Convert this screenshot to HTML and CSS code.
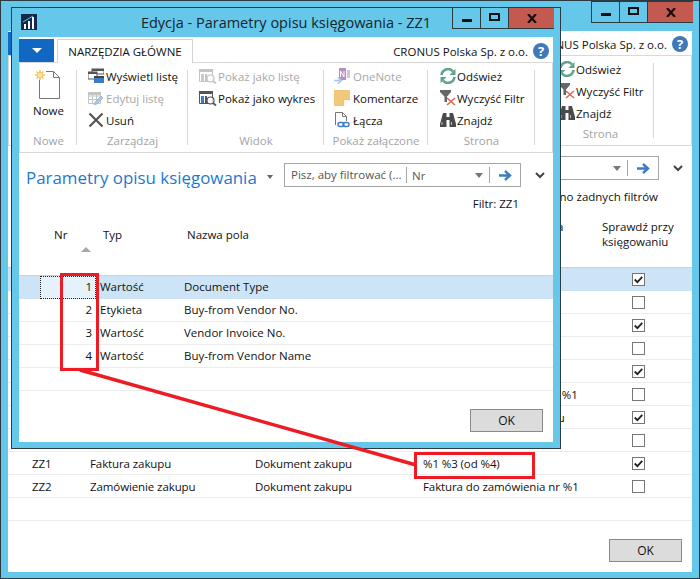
FILE: index.html
```html
<!DOCTYPE html>
<html lang="pl">
<head>
  <meta charset="UTF-8">
  <meta name="viewport" content="width=device-width, initial-scale=1.0">
  <title>Parametry opisu księgowania</title>
  <link rel="stylesheet" href="styles.css">
</head>
<body>
  <!-- shared ribbon icons -->
  <svg class="icon-defs" width="0" height="0">
    <symbol id="i-new" viewBox="0 0 26 29">
      <path d="M5.5 10V28.500H25.500V7.500L19.500 1.500H12" fill="#fff" stroke="#777"/>
      <path d="M19.500 1.500V7.500H25.500" fill="none" stroke="#777"/>
      <path d="M6 0V10M1 5H11M2.500 1.500L9.500 8.500M9.500 1.500L2.500 8.500" stroke="#f2c45f" stroke-width="1.600"/>
      <circle cx="6" cy="5" r="2.500" fill="#fbe7b0" stroke="#f2c45f"/>
    </symbol>
    <symbol id="i-show" viewBox="0 0 16 16">
      <rect x="4" y="1" width="12" height="5" fill="#fff" stroke="#555"/>
      <rect x="4" y="1" width="12" height="2" fill="#555"/>
      <rect x="0" y="4" width="9" height="7" fill="#fff" stroke="#555"/>
      <rect x="0" y="4" width="9" height="2" fill="#555"/>
      <rect x="6" y="8" width="10" height="7" fill="#3d7cc4"/>
      <rect x="6" y="8" width="10" height="2" fill="#444"/>
    </symbol>
    <symbol id="i-edit" viewBox="0 0 16 16">
      <path d="M.5 2.500H12.500V13.500H.5ZM.5 6H12.500M.5 9.500H12.500M4.500 2.500V13.500M8.500 2.500V13.500" fill="#fff" stroke="#c4c4c4"/>
      <rect x="0" y="2" width="13" height="3" fill="#c4c4c4"/>
      <path d="M6 15L7 12L13 6L15 8L9 14Z" fill="#a9c6e4" stroke="#8fb0d2" stroke-width=".6"/>
    </symbol>
    <symbol id="i-delete" viewBox="0 0 16 16">
      <path d="M1.500 1.500L14.500 14.500M14.500 1.500L1.500 14.500" stroke="#555" stroke-width="2.200"/>
    </symbol>
    <symbol id="i-view" viewBox="0 0 18 16">
      <path d="M.5 2.500H13.500V13.500H.5Z" fill="#fff" stroke="currentColor"/>
      <rect x="0" y="1" width="14" height="3" fill="currentColor"/>
      <rect x="2" y="6" width="3" height="7" fill="var(--bar, #c9c9c9)"/>
      <rect x="6" y="6" width="2" height="7" fill="currentColor"/>
      <circle cx="11.500" cy="10.500" r="3.500" fill="#fff" fill-opacity=".8" stroke="currentColor" stroke-width="1.200"/>
      <path d="M14 13L17 15.500" stroke="currentColor" stroke-width="1.800"/>
    </symbol>
    <symbol id="i-onenote" viewBox="0 0 16 16">
      <rect x="5" y="0" width="7" height="12" fill="#b68fc4"/>
      <path d="M6.500 9V3L10 9V3" fill="none" stroke="#fff"/>
      <rect x="13" y="2" width="3" height="8" fill="#d6c3dd"/>
      <path d="M0 12.500H6M4 9.500L7.500 12.500L4 15.500" fill="none" stroke="#a9c6e4" stroke-width="1.600"/>
    </symbol>
    <symbol id="i-note" viewBox="0 0 15 15">
      <path d="M0 0H15V9L9 15H0Z" fill="#f1c878"/>
      <path d="M9 15V9H15Z" fill="#fff"/>
      <path d="M9 15V9H15" fill="none" stroke="#e0ad58" stroke-width=".6"/>
    </symbol>
    <symbol id="i-link" viewBox="0 0 16 16">
      <path d="M1.500 13V.5H8.500L12.500 4.500V9" fill="#fff" stroke="#777"/>
      <path d="M8.500 .5V4.500H12.500" fill="none" stroke="#777"/>
      <rect x="4" y="10.500" width="6" height="4" rx="2" fill="none" stroke="#3d7cc4" stroke-width="1.400"/>
      <rect x="9" y="10.500" width="6" height="4" rx="2" fill="none" stroke="#3d7cc4" stroke-width="1.400"/>
    </symbol>
    <symbol id="i-refresh" viewBox="0 0 16 16">
      <path d="M1.500 7A6.500 6.500 0 0 1 13 3.500" fill="none" stroke="#5fa58c" stroke-width="2.600"/>
      <path d="M15.500 1V7H9.500Z" fill="#5fa58c"/>
      <path d="M14.500 9A6.500 6.500 0 0 1 3 12.500" fill="none" stroke="#5fa58c" stroke-width="2.600"/>
      <path d="M.5 15V9H6.500Z" fill="#5fa58c"/>
    </symbol>
    <symbol id="i-clear" viewBox="0 0 16 16">
      <path d="M0 0H11V2L7 6.500V12H4.500V6.500L0 2Z" fill="#666"/>
      <path d="M7 8L15 15M15 8L7 15" stroke="#e0604c" stroke-width="1.500"/>
    </symbol>
    <symbol id="i-find" viewBox="0 0 16 16">
      <path d="M3 1H6.500V5H9.500V1H13L16 12V15H9.500V8H6.500V15H0V12Z" fill="#4a4a4a"/>
      <path d="M2 10V13M11.500 10V13" stroke="#bbb"/>
    </symbol>
    <symbol id="i-check" viewBox="0 0 12 10">
      <path d="M1 5L4.500 8.500L11 1.500" fill="none" stroke="#222" stroke-width="2.400"/>
    </symbol>
  </svg>

  <!-- window behind -->
  <section class="window window-back">
    <header class="titlebar">
      <div class="caption">
        <span class="cap-btn"><i class="cap-min"></i></span>
        <span class="cap-btn"><i class="cap-max"></i></span>
        <span class="cap-btn cap-close"><svg width="10" height="9"><path d="M1 0L9 9M9 0L1 9" stroke="#111" stroke-width="2.200"/></svg></span>
      </div>
    </header>
    <div class="client">
      <div class="tabstrip tabstrip-back">
        <span class="app-btn"></span>
        <span class="company">CRONUS Polska Sp. z o.o.</span>
        <span class="help">?</span>
      </div>
      <div class="ribbon ribbon-back">
        <div class="group group-strona">
          <div class="group-items">
            <div class="rb-item"><svg class="ico"><use href="#i-refresh"/></svg>Odśwież</div>
            <div class="rb-item"><svg class="ico"><use href="#i-clear"/></svg>Wyczyść Filtr</div>
            <div class="rb-item"><svg class="ico"><use href="#i-find"/></svg>Znajdź</div>
          </div>
          <div class="group-label">Strona</div>
        </div>
      </div>
      <div class="page-head page-head-back">
        <div class="search">
          <span class="search-text"></span>
          <span class="search-field"></span>
          <span class="search-caret"></span>
          <span class="search-go"><svg width="13" height="11"><path d="M0 5.500H10M6 1L11 5.500L6 10" fill="none" stroke="#3d7cc4" stroke-width="2.400"/></svg></span>
        </div>
        <svg class="chevron" width="10" height="7"><path d="M1 1L5 5L9 1" fill="none" stroke="#444" stroke-width="2"/></svg>
      </div>
      <div class="filter-line filter-line-back">Nie zastosowano żadnych filtrów</div>
      <div class="back-head">
        <span></span>
        <span></span>
        <span></span>
        <span class="head-desc">Tekst opisu księgowania</span>
        <span class="back-head-check">Sprawdź przy księgowaniu</span>
      </div>
      <div class="back-table">
        <div class="back-row is-selected"><span></span><span></span><span></span><span></span><span class="box"><svg><use href="#i-check"/></svg></span></div>
        <div class="back-row"><span></span><span></span><span></span><span></span><span class="box"></span></div>
        <div class="back-row"><span></span><span></span><span></span><span></span><span class="box"><svg><use href="#i-check"/></svg></span></div>
        <div class="back-row"><span></span><span></span><span></span><span></span><span class="box"></span></div>
        <div class="back-row"><span></span><span></span><span></span><span></span><span class="box"><svg><use href="#i-check"/></svg></span></div>
        <div class="back-row"><span></span><span></span><span></span><span class="desc-narrow">Faktura do zamówienia nr %1</span><span class="box"></span></div>
        <div class="back-row"><span></span><span></span><span></span><span class="desc-wide">Faktura księgowa zakupu</span><span class="box"><svg><use href="#i-check"/></svg></span></div>
        <div class="back-row"><span></span><span></span><span></span><span></span><span class="box"></span></div>
        <div class="back-row"><span>ZZ1</span><span>Faktura zakupu</span><span>Dokument zakupu</span><span>%1 %3 (od %4)</span><span class="box"><svg><use href="#i-check"/></svg></span></div>
        <div class="back-row"><span>ZZ2</span><span>Zamówienie zakupu</span><span>Dokument zakupu</span><span>Faktura do zamówienia nr %1</span><span class="box"></span></div>
        <div class="back-row"><span></span><span></span><span></span><span></span><span></span></div>
      </div>
      <div class="footer"><button class="ok-btn">OK</button></div>
    </div>
  </section>

  <!-- dialog in front -->
  <section class="window window-front">
    <header class="titlebar">
      <svg class="app-icon" width="16" height="16">
        <rect width="16" height="16" fill="#12294d"/>
        <path d="M3 10H5V15H3ZM7 7H9V15H7ZM11 3H13V15H11Z" fill="#fff"/>
        <path d="M2 8L12 2" stroke="#6fc6e6"/>
      </svg>
      <h1 class="title">Edycja - Parametry opisu księgowania - ZZ1</h1>
      <div class="caption">
        <span class="cap-btn"><i class="cap-min"></i></span>
        <span class="cap-btn"><i class="cap-max"></i></span>
        <span class="cap-btn cap-close"><svg width="10" height="9"><path d="M1 0L9 9M9 0L1 9" stroke="#111" stroke-width="2.200"/></svg></span>
      </div>
    </header>
    <div class="client">
      <div class="tabstrip">
        <span class="app-btn"><i class="app-caret"></i></span>
        <span class="tab">NARZĘDZIA GŁÓWNE</span>
        <span class="company">CRONUS Polska Sp. z o.o.</span>
        <span class="help">?</span>
      </div>
      <div class="ribbon">
        <div class="group group-nowe">
          <div class="group-items">
            <div class="rb-large"><svg class="ico-large"><use href="#i-new"/></svg>Nowe</div>
          </div>
          <div class="group-label">Nowe</div>
        </div>
        <div class="group group-zarzadzaj">
          <div class="group-items">
            <div class="rb-item"><svg class="ico"><use href="#i-show"/></svg>Wyświetl listę</div>
            <div class="rb-item is-off"><svg class="ico"><use href="#i-edit"/></svg>Edytuj listę</div>
            <div class="rb-item"><svg class="ico"><use href="#i-delete"/></svg>Usuń</div>
          </div>
          <div class="group-label">Zarządzaj</div>
        </div>
        <div class="group group-widok">
          <div class="group-items">
            <div class="rb-item is-off"><svg class="ico ico-view"><use href="#i-view"/></svg>Pokaż jako listę</div>
            <div class="rb-item"><svg class="ico ico-view ico-chart"><use href="#i-view"/></svg>Pokaż jako wykres</div>
          </div>
          <div class="group-label">Widok</div>
        </div>
        <div class="group group-zalaczone">
          <div class="group-items">
            <div class="rb-item is-off"><svg class="ico"><use href="#i-onenote"/></svg>OneNote</div>
            <div class="rb-item"><svg class="ico"><use href="#i-note"/></svg>Komentarze</div>
            <div class="rb-item"><svg class="ico"><use href="#i-link"/></svg>Łącza</div>
          </div>
          <div class="group-label">Pokaż załączone</div>
        </div>
        <div class="group group-strona">
          <div class="group-items">
            <div class="rb-item"><svg class="ico"><use href="#i-refresh"/></svg>Odśwież</div>
            <div class="rb-item"><svg class="ico"><use href="#i-clear"/></svg>Wyczyść Filtr</div>
            <div class="rb-item"><svg class="ico"><use href="#i-find"/></svg>Znajdź</div>
          </div>
          <div class="group-label">Strona</div>
        </div>
      </div>
      <div class="page-head">
        <h2 class="page-title">Parametry opisu księgowania</h2>
        <i class="title-caret"></i>
        <div class="search">
          <span class="search-text">Pisz, aby filtrować (...</span>
          <span class="search-field">Nr</span>
          <span class="search-caret"></span>
          <span class="search-go"><svg width="13" height="11"><path d="M0 5.500H10M6 1L11 5.500L6 10" fill="none" stroke="#3d7cc4" stroke-width="2.400"/></svg></span>
        </div>
        <svg class="chevron" width="10" height="7"><path d="M1 1L5 5L9 1" fill="none" stroke="#444" stroke-width="2"/></svg>
      </div>
      <div class="filter-line">Filtr: ZZ1</div>
      <div class="front-head">
        <div class="head-nr">Nr<i class="sort-up"></i></div>
        <div>Typ</div>
        <div>Nazwa pola</div>
      </div>
      <div class="front-table">
        <div class="front-row is-selected"><span class="cell-nr is-focus">1</span><span>Wartość</span><span>Document Type</span></div>
        <div class="front-row"><span class="cell-nr">2</span><span>Etykieta</span><span>Buy-from Vendor No.</span></div>
        <div class="front-row"><span class="cell-nr">3</span><span>Wartość</span><span>Vendor Invoice No.</span></div>
        <div class="front-row"><span class="cell-nr">4</span><span>Wartość</span><span>Buy-from Vendor Name</span></div>
        <div class="front-row"><span class="cell-nr"></span><span></span><span></span></div>
      </div>
      <div class="footer"><button class="ok-btn">OK</button></div>
    </div>
  </section>

  <!-- red annotation drawn over the screenshot -->
  <svg class="annotation" width="700" height="579">
    <path d="M80 370L416 465" stroke="#ed1c24" stroke-width="3.500"/>
    <rect x="61.500" y="274.500" width="36" height="95" fill="none" stroke="#ed1c24" stroke-width="3"/>
    <rect x="415.500" y="453.500" width="118" height="24" fill="none" stroke="#ed1c24" stroke-width="3"/>
  </svg>
</body>
</html>
```
FILE: styles.css
```css
* {
  box-sizing: border-box;
}
body {
  margin: 0;
  width: 700px;
  height: 579px;
  overflow: hidden;
  position: relative;
  background: #65c8ea;
  font-family: "Open Sans", "Noto Sans", sans-serif;
  font-size: 11.5px;
  color: #111;
}
.icon-defs {
  position: absolute;
}

/* windows */
.window {
  position: absolute;
  display: flex;
  flex-direction: column;
  background: #65c8ea;
  border: 1px solid #2c3a42;
}
.window-back {
  left: 0;
  top: 0;
  width: 700px;
  height: 579px;
}
.window-front {
  left: 11px;
  top: 7px;
  width: 550px;
  height: 442px;
}
.titlebar {
  position: relative;
  height: 29px;
  flex: none;
  display: flex;
  align-items: center;
  justify-content: center;
}
.window-back .titlebar {
  height: 30px;
}
.app-icon {
  position: absolute;
  left: 9px;
  top: 6px;
}
.title {
  margin: 0;
  font-size: 14.5px;
  font-weight: 400;
  color: #15242c;
}
.caption {
  position: absolute;
  right: 6px;
  top: -1px;
  display: flex;
  border: 1px solid #2c3a42;
  border-right: none;
  height: 22px;
}
.window-back .caption {
  top: 0;
}
.cap-btn {
  width: 28px;
  border-right: 1px solid #2c3a42;
  display: flex;
  align-items: center;
  justify-content: center;
}
.cap-close {
  width: 45px;
  background: #c4594f;
  border-right: none;
}
.cap-min {
  width: 10px;
  height: 3px;
  margin-top: 5px;
  background: #111;
}
.cap-max {
  width: 11px;
  height: 8px;
  border: 2px solid #111;
  margin-top: -2px;
}
.client {
  flex: 1;
  margin: 0 7px 6px;
  background: #fff;
  display: flex;
  flex-direction: column;
  min-height: 0;
}

/* tabs and ribbon */
.tabstrip {
  height: 25px;
  flex: none;
  display: flex;
  align-items: flex-end;
}
.tabstrip-back {
  height: 24px;
}
.app-btn {
  width: 35px;
  height: 23px;
  background: #1068c2;
  display: flex;
  align-items: center;
  justify-content: center;
}
.app-caret {
  border: 5px solid transparent;
  border-top: 5px solid #fff;
  border-bottom: none;
}
.tab {
  margin-left: 3px;
  margin-bottom: -1px;
  width: 136px;
  height: 24px;
  background: #fff;
  border: 1px solid #d4d4d4;
  border-bottom: none;
  position: relative;
  z-index: 1;
  text-align: center;
  line-height: 24px;
  font-size: 11.5px;
}
.company {
  margin-left: auto;
  align-self: center;
  margin-top: 3px;
}
.help {
  width: 16px;
  height: 16px;
  margin: 0 4px 3px 5px;
  border-radius: 50%;
  background: #3f79b8;
  color: #fff;
  font-size: 13px;
  font-weight: 700;
  line-height: 16px;
  text-align: center;
}
.ribbon {
  flex: none;
  height: 91px;
  padding: 2px 0 3px;
  display: flex;
  border: 1px solid #d8d8d8;
}
.ribbon-back {
  justify-content: flex-end;
  padding-right: 37px;
}
.group {
  position: relative;
  height: 84px;
  display: flex;
  flex-direction: column;
}
.group::after {
  content: "";
  position: absolute;
  right: 0;
  top: 5px;
  bottom: 4px;
  width: 1px;
  background: #d8d8d8;
}
.group-items {
  height: 67px;
}
.group-label {
  height: 17px;
  line-height: 17px;
  text-align: center;
  color: #a3a3a3;
}
.group-nowe {
  width: 57px;
}
.group-zarzadzaj {
  width: 111px;
}
.group-widok {
  width: 136px;
}
.group-zalaczone {
  width: 104px;
}
.group-strona {
  width: 107px;
}
.rb-item {
  height: 22px;
  display: flex;
  align-items: center;
  gap: 2px;
  white-space: nowrap;
}
.rb-item.is-off {
  color: #a8a8a8;
}
.group-zarzadzaj .rb-item {
  padding-left: 11px;
}
.group-widok .rb-item {
  padding-left: 11px;
  gap: 1px;
}
.group-zalaczone .rb-item {
  padding-left: 10px;
  gap: 3px;
}
.group-strona .rb-item {
  padding-left: 12px;
  gap: 1px;
}
.ico {
  width: 16px;
  height: 16px;
  flex: none;
}
.ico-view {
  width: 18px;
  color: #c4c4c4;
}
.ico-chart {
  color: #555;
  --bar: #3d7cc4;
}
.rb-large {
  display: flex;
  flex-direction: column;
  align-items: center;
  padding-top: 5px;
  line-height: 24px;
}
.ico-large {
  width: 26px;
  height: 29px;
  margin-left: -4px;
}

/* title row and filter box */
.page-head {
  flex: none;
  height: 24px;
  margin-top: 10px;
  padding-left: 7px;
  display: flex;
  align-items: center;
}
.page-head-back {
  justify-content: flex-end;
  padding-right: 1px;
}
.page-title {
  margin: 0;
  padding-top: 5px;
  font-size: 16.9px;
  font-weight: 400;
  color: #1b7ad0;
  white-space: nowrap;
}
.title-caret {
  margin-left: 10px;
  margin-top: 4px;
  border: 3.5px solid transparent;
  border-top: 4px solid #666;
  border-bottom: none;
}
.search {
  width: 237px;
  height: 24px;
  margin-left: auto;
  display: flex;
  align-items: center;
  border: 1px solid #a6a6a6;
  color: #555;
  white-space: nowrap;
}
.search-text {
  width: 122px;
  height: 16px;
  padding-left: 6px;
  border-right: 1px solid #a6a6a6;
  line-height: 16px;
}
.search-field {
  width: 68px;
  padding-left: 5px;
}
.search-caret {
  margin-right: 6px;
  border: 4px solid transparent;
  border-top: 5px solid #777;
  border-bottom: none;
}
.search-go {
  flex: 1;
  height: 16px;
  border-left: 1px solid #a6a6a6;
  display: flex;
  align-items: center;
  justify-content: center;
}
.chevron {
  margin: 0 8px 0 14px;
}
.filter-line {
  flex: none;
  height: 18px;
  margin-top: 7px;
  padding-right: 34px;
  line-height: 20px;
  text-align: right;
}
.filter-line-back {
  margin-top: 7px;
}

/* dialog table */
.front-head {
  flex: none;
  height: 63px;
  display: grid;
  grid-template-columns: 77px 84px 1fr;
  padding-top: 15px;
}
.front-head > div {
  padding-left: 7px;
}
.front-head .head-nr {
  padding-left: 35px;
}
.sort-up {
  display: block;
  width: 0;
  margin: 5px 0 0 27px;
  border: 5px solid transparent;
  border-bottom: 5px solid #a8a8a8;
  border-top: none;
}
.front-table {
  flex: none;
  border-top: 1px solid #d0d0d0;
}
.front-row {
  height: 23px;
  display: grid;
  grid-template-columns: 77px 84px 1fr;
  border-bottom: 1px solid #ececec;
  line-height: 22px;
}
.front-row > span {
  padding-left: 4px;
}
.front-row .cell-nr {
  margin-left: 21px;
  padding: 0 4px 0 0;
  text-align: right;
}
.front-row.is-selected {
  background: #cde4f7;
  border-bottom: none;
}
.is-focus {
  background: #e5f1fb;
  outline: 1px dotted #222;
  outline-offset: -1px;
}
.footer {
  margin-top: auto;
  display: flex;
  justify-content: flex-end;
  padding: 0 10px 10px 0;
}
.ok-btn {
  width: 73px;
  height: 23px;
  padding: 0;
  background: #dcdcdc;
  border: 1px solid #8a8a8a;
  font-family: inherit;
  font-size: 12px;
  color: #111;
}

/* table of the window behind */
.back-head {
  flex: none;
  height: 62px;
  display: grid;
  grid-template-columns: 78px 165px 168px 178px 1fr;
  padding-top: 14px;
  line-height: 15px;
}
.back-head span {
  padding-left: 4px;
  white-space: nowrap;
}
.back-head span:first-child {
  padding-left: 24px;
}
.back-head .head-desc {
  padding-left: 15px;
}
.back-head .back-head-check {
  padding-left: 5px;
  width: 90px;
  white-space: normal;
}
.back-table {
  flex: none;
  border-top: 1px solid #d0d0d0;
}
.back-row {
  height: 23px;
  display: grid;
  grid-template-columns: 78px 165px 168px 178px 83px;
  align-items: center;
  border-bottom: 1px solid #ececec;
  white-space: nowrap;
  letter-spacing: -0.1px;
}
.back-row > span {
  padding-left: 4px;
}
.back-row > span:first-child {
  padding-left: 24px;
}
.back-row .desc-narrow {
  padding-left: 3px;
}
.back-row .desc-wide {
  padding-left: 13px;
}
.back-row.is-selected {
  background: #cde4f7;
  border-bottom: none;
}
.back-row .box {
  justify-self: center;
  width: 13px;
  height: 13px;
  padding: 1px;
  background: #fff;
  border: 1px solid #777;
  display: flex;
}
.box svg {
  width: 9px;
  height: 9px;
}

/* overlay */
.annotation {
  position: absolute;
  left: 0;
  top: 0;
}
```
